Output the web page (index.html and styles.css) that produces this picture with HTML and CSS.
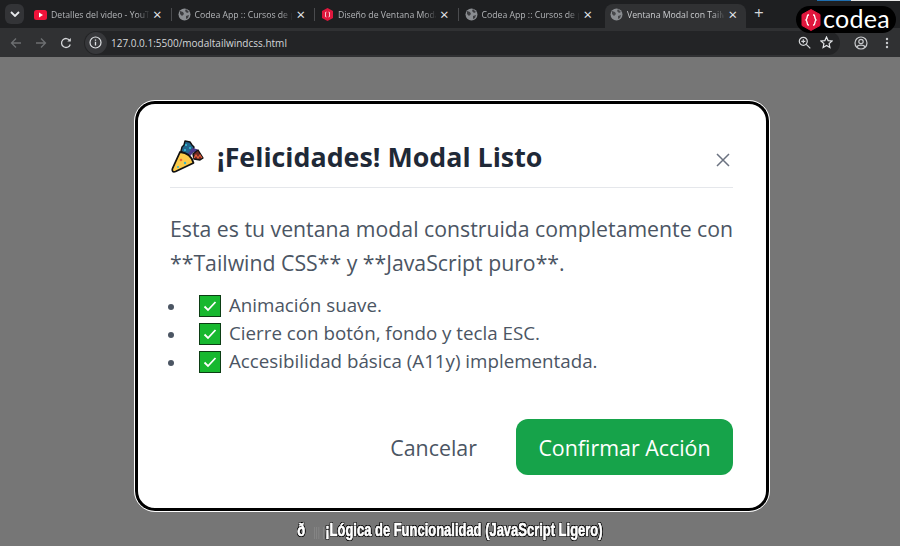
FILE: index.html
```html
<!DOCTYPE html>
<html lang="es">

<head>
  <meta charset="utf-8">
  <meta name="viewport" content="width=device-width">
  <title>Ventana Modal con Tailwind</title>
  <link rel="stylesheet" href="styles.css">
</head>

<body>
  <!-- Browser tabs -->
  <div class="tabstrip">
    <button class="tab-menu" type="button">
      <svg width="10" height="6" viewBox="0 0 10 6"><path d="M1 1l4 4 4-4" fill="none" stroke="#e8eaed" stroke-width="1.8"/></svg>
    </button>
    <div class="tab">
      <svg class="favicon" width="13" height="10" viewBox="0 0 13 10"><rect width="13" height="10" rx="2.5" fill="#f0133a"/><path d="M5 2.6v4.8L9 5z" fill="#fff"/></svg>
      <span class="tab-title">Detalles del video - YouT</span>
      <span class="tab-close">×</span>
    </div>
    <div class="tab tab-sep">
      <svg class="favicon" width="13" height="13" viewBox="0 0 13 13"><circle cx="6.5" cy="6.5" r="6" fill="#8a8d91"/><path d="M2 3l3 1 1 2-2 2-2-2zM8 1l3 3-2 1-2-2zM8 8l3-1-1 3-2 1z" fill="#3c3d40"/></svg>
      <span class="tab-title">Codea App :: Cursos de p</span>
      <span class="tab-close">×</span>
    </div>
    <div class="tab tab-sep">
      <svg class="favicon" width="13" height="13" viewBox="-0.500 0 13 13"><path d="M6 0l5.5 3v7L6 13 .5 10V3z" fill="#e0173d"/><path d="M4.8 4C3.8 4 4 5.500 4 6.500S3.800 9 4.800 9M7.200 4c1 0 .8 1.500.8 2.500S8.200 9 7.200 9" fill="none" stroke="#fff"/></svg>
      <span class="tab-title">Diseño de Ventana Moda</span>
      <span class="tab-close">×</span>
    </div>
    <div class="tab tab-sep">
      <svg class="favicon" width="13" height="13" viewBox="0 0 13 13"><circle cx="6.5" cy="6.5" r="6" fill="#8a8d91"/><path d="M2 3l3 1 1 2-2 2-2-2zM8 1l3 3-2 1-2-2zM8 8l3-1-1 3-2 1z" fill="#3c3d40"/></svg>
      <span class="tab-title">Codea App :: Cursos de p</span>
      <span class="tab-close">×</span>
    </div>
    <div class="tab tab-active">
      <svg class="favicon" width="13" height="13" viewBox="0 0 13 13"><circle cx="6.5" cy="6.5" r="6" fill="#8a8d91"/><path d="M2 3l3 1 1 2-2 2-2-2zM8 1l3 3-2 1-2-2zM8 8l3-1-1 3-2 1z" fill="#47484b"/></svg>
      <span class="tab-title">Ventana Modal con Tailw</span>
      <span class="tab-close">×</span>
    </div>
    <span class="tab-new">+</span>
  </div>

  <!-- Address bar -->
  <div class="toolbar">
    <svg class="nav-icon" width="12" height="12" viewBox="0 0 12 12"><path d="M11 6H1.500M6 1.500L1.500 6 6 10.500" fill="none" stroke="#6d6f72" stroke-width="1.300"/></svg>
    <svg class="nav-icon" width="12" height="12" viewBox="0 0 12 12"><path d="M1 6h9.500M6 1.500L10.500 6 6 10.500" fill="none" stroke="#6d6f72" stroke-width="1.300"/></svg>
    <svg class="nav-icon" width="12" height="12" viewBox="0 0 12 12"><path d="M10.300 7.500A4.500 4.500 0 1 1 9.800 3.500" fill="none" stroke="#d5d7da" stroke-width="1.300"/><path d="M10.800 1v3.500H7.300z" fill="#d5d7da"/></svg>
    <div class="urlbar">
      <span class="site-info">
        <svg width="13" height="13" viewBox="0 0 13 13"><circle cx="6.500" cy="6.500" r="5.500" fill="none" stroke="#dfe1e4" stroke-width="1.200"/><path d="M6.500 5.800v3.600M6.500 3.400v1.300" stroke="#dfe1e4" stroke-width="1.300"/></svg>
      </span>
      <span class="url">127.0.0.1:5500/modaltailwindcss.html</span>
      <svg class="url-icon" width="13" height="13" viewBox="0 0 13 13"><circle cx="5.300" cy="5.300" r="4" fill="none" stroke="#d5d7da" stroke-width="1.200"/><path d="M8.300 8.300l4 4M3.300 5.300h4M5.300 3.300v4" stroke="#d5d7da" stroke-width="1.200"/></svg>
      <svg class="url-icon" width="13" height="13" viewBox="0 0 13 13"><path d="M6.500 1l1.600 3.600 3.900.4-2.900 2.600.8 3.900-3.400-2-3.400 2 .8-3.900L1 5l3.900-.4z" fill="none" stroke="#e3e5e8" stroke-width="1.200"/></svg>
    </div>
    <svg class="tool-icon" width="14" height="14" viewBox="0 0 14 14"><circle cx="7" cy="7" r="6" fill="none" stroke="#c9cbce" stroke-width="1.200"/><circle cx="7" cy="5.500" r="2.200" fill="none" stroke="#c9cbce" stroke-width="1.200"/><path d="M3 11c1-2.500 7-2.500 8 0" fill="none" stroke="#c9cbce" stroke-width="1.200"/></svg>
    <svg class="tool-icon" width="4" height="12" viewBox="0 0 4 12"><circle cx="2" cy="2" r="1.200" fill="#c9cbce"/><circle cx="2" cy="6" r="1.200" fill="#c9cbce"/><circle cx="2" cy="10" r="1.200" fill="#c9cbce"/></svg>
  </div>

  <!-- Codea watermark, sits over the browser chrome -->
  <div class="top-line"></div>
  <div class="codea-badge">
    <svg width="20" height="22" viewBox="0 0 20 22"><path d="M10 .5l9 5v11l-9 5-9-5v-11z" fill="#e0173d" stroke="#e0173d" stroke-linejoin="round"/><path d="M8 6H7C6 6 6.500 10 5 11 6.500 12 6 16 7 16h1M12 6h1c1 0 .5 4 2 5-1.500 1-1 5-2 5h-1" fill="none" stroke="#fff" stroke-width="1.400"/></svg>
    <span class="codea-name">codea</span>
  </div>

  <main class="page">
    <div class="modal">
      <div class="modal-header">
        <h2 class="modal-title">
          <svg class="popper" width="34" height="34" viewBox="0 0 34 34">
            <path d="M12 7l2-2 1-4 5 1 2 3 2 2-1 5-3 2-3 2-3-2-3-3z" fill="#22668f" stroke="#111" stroke-width="1.400" stroke-linejoin="round"/>
            <circle cx="16" cy="5" r="1" fill="#39c6d8"/><circle cx="20" cy="8" r="1" fill="#39c6d8"/><circle cx="15" cy="10" r="1" fill="#39c6d8"/>
            <path d="M19 15l4-5 4 1" fill="none" stroke="#4b3a8c" stroke-width="3.500"/>
            <path d="M23 14l5-4 5 8-3 2-6-1z" fill="#6f2b25" stroke="#111" stroke-width="1.400" stroke-linejoin="round"/>
            <path d="M24 18l2-3 2 3 2-3 2 3" fill="none" stroke="#e9603a" stroke-width="1.200"/>
            <path d="M10 12Q21 13 23.500 23L5.500 31.500C3 32.500 1.500 31 2.500 28.500z" fill="#fdcb4a" stroke="#111" stroke-width="1.800" stroke-linejoin="round"/>
            <circle cx="11" cy="20" r="1.300" fill="#ef6a3a"/>
            <circle cx="15" cy="23" r="1.200" fill="#39b5c9"/>
            <circle cx="8" cy="27" r="1" fill="#39b5c9"/>
          </svg>
          ¡Felicidades! Modal Listo
        </h2>
        <button class="close-btn" type="button">
          <svg width="14" height="14" viewBox="0 0 14 14"><path d="M1 1l12 12M13 1L1 13" stroke="#6b7280" stroke-width="1.500"/></svg>
        </button>
      </div>

      <p class="modal-text">Esta es tu ventana modal construida completamente con **Tailwind CSS** y **JavaScript puro**.</p>

      <ul class="check-list">
        <li><svg class="check" width="22" height="22" viewBox="0 0 22 22"><rect x=".5" y=".5" width="21" height="21" fill="#17b82f" stroke="#0c3d14"/><path d="M5.500 11.500l3.500 3.500 7.500-8" fill="none" stroke="#fff" stroke-width="1.800"/></svg>Animación suave.</li>
        <li><svg class="check" width="22" height="22" viewBox="0 0 22 22"><rect x=".5" y=".5" width="21" height="21" fill="#17b82f" stroke="#0c3d14"/><path d="M5.500 11.500l3.500 3.500 7.500-8" fill="none" stroke="#fff" stroke-width="1.800"/></svg>Cierre con botón, fondo y tecla ESC.</li>
        <li><svg class="check" width="22" height="22" viewBox="0 0 22 22"><rect x=".5" y=".5" width="21" height="21" fill="#17b82f" stroke="#0c3d14"/><path d="M5.500 11.500l3.500 3.500 7.500-8" fill="none" stroke="#fff" stroke-width="1.800"/></svg>Accesibilidad básica (A11y) implementada.</li>
      </ul>

      <div class="modal-actions">
        <button class="btn-cancel" type="button">Cancelar</button>
        <button class="btn-confirm" type="button">Confirmar Acción</button>
      </div>
    </div>

    <div class="caption-row">
      <p class="caption">ð <span class="caption-glitch">||| |</span>¡Lógica de Funcionalidad (JavaScript Ligero)</p>
    </div>
  </main>
</body>

</html>
```

FILE: styles.css
```css
* {
  box-sizing: border-box;
}

html,
body {
  margin: 0;
  height: 100%;
  overflow: hidden;
}

body {
  display: flex;
  flex-direction: column;
  background-color: #767676;
  font-family: "Open Sans", "Noto Sans", sans-serif;
}

/* Tab strip */
.tabstrip {
  display: flex;
  align-items: flex-end;
  height: 28px;
  padding-left: 5px;
  background-color: #1e1f21;
  color: #b4b6b9;
  font-size: 8.700px;
}

.tab-menu {
  display: flex;
  align-items: center;
  justify-content: center;
  align-self: flex-start;
  width: 19px;
  height: 20px;
  margin: 4px 3px 0 0;
  padding: 0;
  border: none;
  border-radius: 6px;
  background-color: #333437;
}

.tab {
  position: relative;
  display: flex;
  align-items: center;
  gap: 4px;
  width: 143.500px;
  height: 24px;
  padding: 0 9px 3px 7px;
}

.tab-sep::before {
  content: "";
  position: absolute;
  left: 0;
  top: 4px;
  height: 13px;
  border-left: 1px solid #4a4b4e;
}

.tab-active {
  width: 141px;
  margin-left: 4px;
  padding-left: 5px;
  background-color: #303133;
  border-radius: 8px 8px 0 0;
  color: #c9cbce;
}

.favicon {
  flex: none;
}

.tab-title {
  flex: 1;
  min-width: 0;
  white-space: nowrap;
  -webkit-mask-image: linear-gradient(to right, #000 88%, transparent 101%);
  mask-image: linear-gradient(to right, #000 88%, transparent 101%);
}

.tab-close {
  flex: none;
  color: #e8eaed;
  font-size: 15px;
  line-height: 1;
}

.tab-new {
  margin: 0 0 5px 8px;
  color: #d5d7da;
  font-size: 17px;
  line-height: 20px;
}

/* Address bar */
.toolbar {
  display: flex;
  align-items: center;
  height: 29px;
  padding: 0 11px 0 10px;
  background-color: #303133;
}

.nav-icon {
  margin-right: 13px;
}

.nav-icon:nth-child(3) {
  margin-right: 12px;
}

.urlbar {
  display: flex;
  align-items: center;
  width: 757px;
  height: 24px;
  margin-right: 14px;
  padding-right: 7px;
  border-radius: 12px;
  background-color: #232426;
  color: #d5d7da;
  font-size: 10px;
}

.site-info {
  display: flex;
  align-items: center;
  justify-content: center;
  width: 22px;
  height: 22px;
  margin: 0 4px 0 1px;
  border-radius: 50%;
  background-color: #37383b;
}

.url {
  flex: 1;
}

.url-icon {
  margin-left: 9px;
}

.tool-icon {
  margin-right: 17px;
}

.tool-icon:last-child {
  margin-right: 0;
}

.top-line {
  position: absolute;
  top: 0;
  left: 817px;
  width: 83px;
  height: 1px;
  background: linear-gradient(to right, #1f6fb0 41%, #e8e8e8 41%);
}

.codea-badge {
  position: absolute;
  top: 6px;
  left: 796px;
  display: flex;
  align-items: center;
  gap: 2px;
  width: 100px;
  height: 27px;
  padding-left: 5px;
  border-radius: 14px;
  background-color: #000;
}

.codea-name {
  padding-bottom: 3px;
  color: #fff;
  font-family: "Lato", sans-serif;
  font-size: 25px;
  line-height: 24px;
  letter-spacing: 0.300px;
}

/* Modal */
.page {
  flex: 1;
  padding: 44px 0 0 4px;
}

.modal {
  display: flex;
  flex-direction: column;
  width: 634px;
  height: 410px;
  margin: 0 auto;
  padding: 25px 33px 33px 32px;
  border: 3px solid #000;
  border-radius: 20px;
  outline: 1px solid #fff;
  background-color: #fff;
}

.modal-header {
  display: flex;
  align-items: center;
  justify-content: space-between;
  flex: none;
  height: 59px;
  padding-right: 3px;
  border-bottom: 1px solid #e5e7eb;
}

.modal-title {
  display: flex;
  align-items: center;
  gap: 13px;
  margin: 0 0 4px;
  color: #1f2937;
  font-size: 26.800px;
  font-weight: 700;
  white-space: nowrap;
}

.popper {
  margin-top: 2px;
}

.close-btn {
  display: flex;
  margin-top: 4px;
  padding: 0;
  border: none;
  background: none;
}

.modal-text {
  margin: 24px -4px 0 0;
  color: #4b5563;
  font-size: 21.250px;
  line-height: 34px;
}

.check-list {
  margin: 11px 0 0;
  padding: 0 0 0 16px;
  color: #4b5563;
  font-size: 18.750px;
  line-height: 28px;
}

.check-list li::marker {
  font-size: 16px;
}

.check {
  margin: 0 8px 0 13px;
  vertical-align: -5px;
}

.modal-actions {
  display: flex;
  align-items: center;
  justify-content: flex-end;
  gap: 39px;
  margin-top: auto;
}

.btn-cancel,
.btn-confirm {
  padding: 0;
  border: none;
  font-family: inherit;
  font-size: 21.400px;
}

.btn-cancel {
  background: none;
  color: #4b5563;
}

.btn-confirm {
  width: 217px;
  height: 56px;
  border-radius: 12px;
  background-color: #16a34a;
  color: #fff;
}

/* Stray heading under the modal, squeezed like the reference's display face */
.caption-row {
  display: flex;
  justify-content: center;
  margin: 9px 0 0 -4px;
}

.caption {
  margin: 0;
  color: #fff;
  font-family: "Liberation Sans", sans-serif;
  font-size: 18px;
  font-weight: 700;
  line-height: 20px;
  white-space: nowrap;
  transform: scaleX(0.72);
  -webkit-text-stroke: 0.700px #fff;
  text-shadow: 1px 0 0 #000, -1px 0 0 #000, 0 1px 0 #000, 0 -1px 0 #000, 1px 1px 0 #000, -1px -1px 0 #000, 1px -1px 0 #000, -1px 1px 0 #000;
}

.caption-glitch {
  margin: 0 1px 0 6px;
  color: #8a8a8a;
  -webkit-text-stroke: 0;
  font-size: 12px;
  font-weight: 400;
  text-shadow: none;
}
```
